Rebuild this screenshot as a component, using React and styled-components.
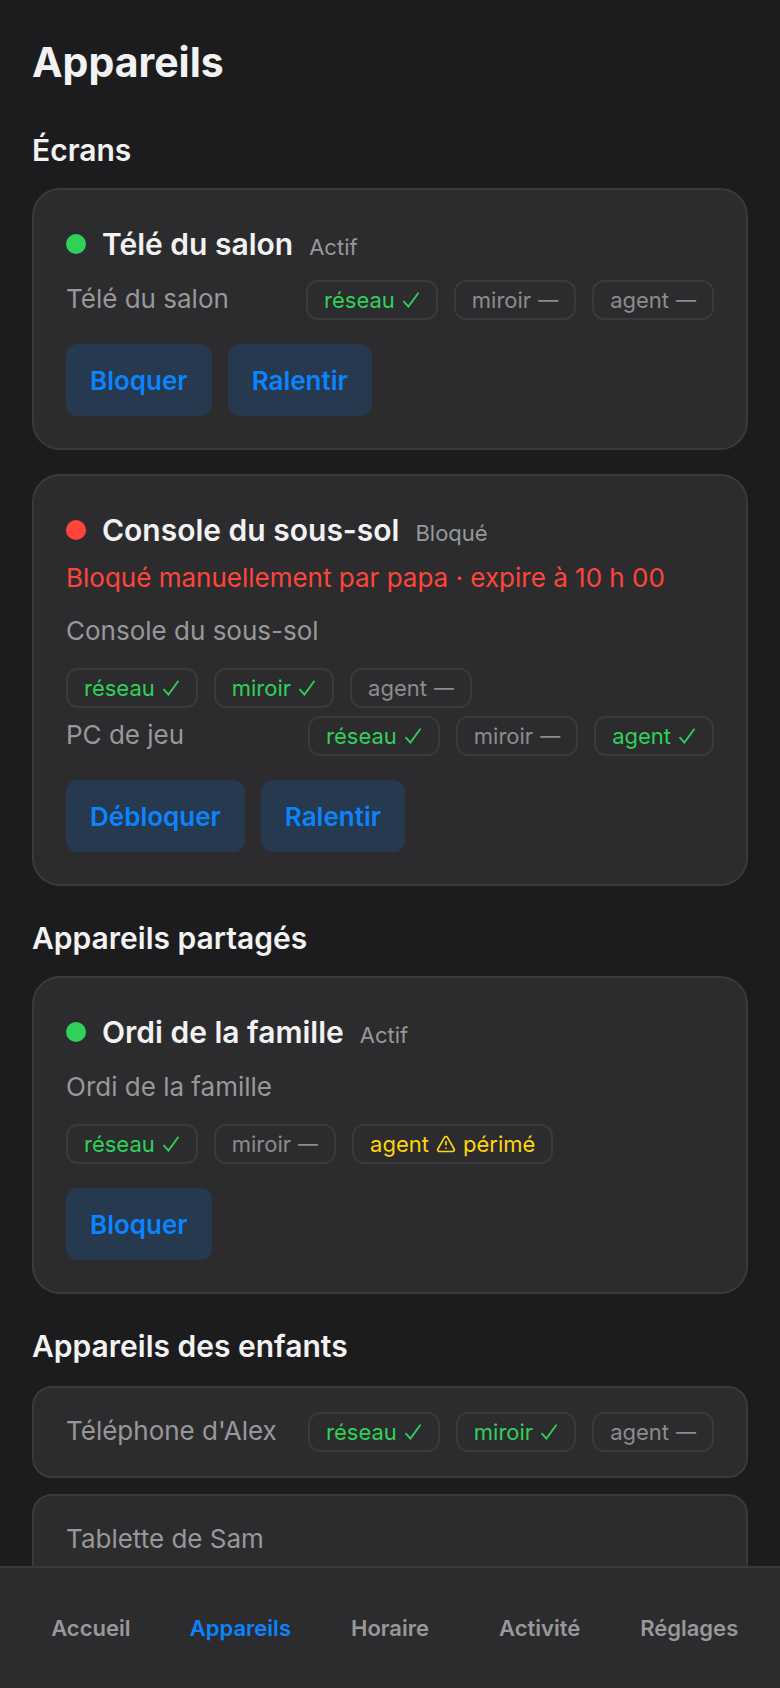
import React, { useState } from "react";
import styled, { createGlobalStyle } from "styled-components";
import { TriangleAlert } from "lucide-react";

const screens = [
  {
    name: "Télé du salon",
    blocked: false,
    devices: [
      { name: "Télé du salon", chips: { réseau: "ok", miroir: "none", agent: "none" } },
    ],
    actions: ["Bloquer", "Ralentir"],
  },
  {
    name: "Console du sous-sol",
    blocked: true,
    reason: "Bloqué manuellement par papa · expire à 10 h 00",
    devices: [
      { name: "Console du sous-sol", chips: { réseau: "ok", miroir: "ok", agent: "none" } },
      { name: "PC de jeu", chips: { réseau: "ok", miroir: "none", agent: "ok" } },
    ],
    actions: ["Débloquer", "Ralentir"],
  },
];

const shared = [
  {
    name: "Ordi de la famille",
    blocked: false,
    devices: [
      { name: "Ordi de la famille", chips: { réseau: "ok", miroir: "none", agent: "stale" } },
    ],
    actions: ["Bloquer"],
  },
];

const kids = [
  { name: "Téléphone d'Alex", chips: { réseau: "ok", miroir: "ok", agent: "none" } },
  { name: "Tablette de Sam", chips: {} },
];

const tabs = ["Accueil", "Appareils", "Horaire", "Activité", "Réglages"];

function StatusChip({ label, status }) {
  return (
    <Chip $status={status}>
      {label}
      {status === "ok" && (
        <CheckMark viewBox="0 0 18 16" role="img" aria-label="ok">
          <path d="M1.5 9.2 L6.4 14.6 L16.5 0.8" />
        </CheckMark>
      )}
      {status === "none" && <Dash>—</Dash>}
      {status === "stale" && (
        <>
          <TriangleAlert size={20} strokeWidth={2} aria-hidden="true" />
          périmé
        </>
      )}
    </Chip>
  );
}

function Device({ device }) {
  return (
    <>
      <DeviceName>{device.name}</DeviceName>
      <Chips>
        {Object.entries(device.chips).map(([label, status]) => (
          <StatusChip key={label} label={label} status={status} />
        ))}
      </Chips>
    </>
  );
}

function GroupCard({ group }) {
  return (
    <Card>
      <CardHeader>
        <Dot $blocked={group.blocked} />
        <CardTitle>{group.name}</CardTitle>
        <State>{group.blocked ? "Bloqué" : "Actif"}</State>
      </CardHeader>
      {group.reason && <Reason>{group.reason}</Reason>}
      <DeviceList>
        {group.devices.map((device) => (
          <DeviceRow key={device.name}>
            <Device device={device} />
          </DeviceRow>
        ))}
      </DeviceList>
      <Actions>
        {group.actions.map((action) => (
          <ActionButton key={action} type="button">{action}</ActionButton>
        ))}
      </Actions>
    </Card>
  );
}

export default function App() {
  const [active, setActive] = useState("Appareils");

  return (
    <>
      <GlobalStyle />
      <Page>
        <PageTitle>Appareils</PageTitle>
        <section>
          <SectionTitle>Écrans</SectionTitle>
          <CardStack>
            {screens.map((group) => <GroupCard key={group.name} group={group} />)}
          </CardStack>
        </section>
        <section>
          <SectionTitle>Appareils partagés</SectionTitle>
          <CardStack>
            {shared.map((group) => <GroupCard key={group.name} group={group} />)}
          </CardStack>
        </section>
        <section>
          <SectionTitle>Appareils des enfants</SectionTitle>
          <KidList>
            {kids.map((device) => (
              <KidRow key={device.name}>
                <Device device={device} />
              </KidRow>
            ))}
          </KidList>
        </section>
      </Page>
      <TabBar>
        {tabs.map((tab) => (
          <TabLink
            key={tab}
            href={`#${tab.toLowerCase()}`}
            $active={tab === active}
            onClick={() => setActive(tab)}
          >
            {tab}
          </TabLink>
        ))}
      </TabBar>
    </>
  );
}

const GlobalStyle = createGlobalStyle`
  * {
    box-sizing: border-box;
  }
  body {
    margin: 0;
    background: #1c1c1e;
    color: #f2f2f2;
    font-family: Inter, "Liberation Sans", sans-serif;
    font-size: 26px;
    -webkit-font-smoothing: antialiased;
  }
  h1, h2, h3, p, ul {
    margin: 0;
    padding: 0;
  }
  ul {
    list-style: none;
  }
`;

const Page = styled.main`
  padding: 36px 32px 154px;
`;

const PageTitle = styled.h1`
  margin-bottom: 41px;
  font-size: 41px;
  font-weight: 700;
  line-height: 52px;
`;

const SectionTitle = styled.h2`
  margin-bottom: 17px;
  font-size: 30px;
  font-weight: 600;
  line-height: 42px;
  section + section & {
    margin-top: 31px;
  }
`;

const CardStack = styled.div`
  display: flex;
  flex-direction: column;
  gap: 24px;
`;

const Card = styled.article`
  padding: 32px;
  border: 2px solid #3a3a3c;
  border-radius: 28px;
  background: #2c2c2e;
`;

const CardHeader = styled.header`
  display: flex;
  align-items: baseline;
  gap: 16px;
`;

const Dot = styled.span`
  align-self: center;
  width: 20px;
  height: 20px;
  border-radius: 50%;
  background: ${({ $blocked }) => ($blocked ? "#ff453a" : "#30d158")};
`;

const CardTitle = styled.h3`
  font-size: 30px;
  font-weight: 600;
  line-height: 44px;
`;

const State = styled.span`
  color: #98989a;
  font-size: 22px;
  line-height: 28px;
`;

const Reason = styled.p`
  margin-top: 6px;
  color: #ff453a;
  line-height: 40px;
`;

const DeviceList = styled.ul`
  display: flex;
  flex-direction: column;
  gap: 8px;
  margin-top: 14px;
`;

const DeviceRow = styled.li`
  display: flex;
  flex-wrap: wrap;
  align-items: baseline;
  justify-content: space-between;
  gap: 18px 16px;
`;

const DeviceName = styled.span`
  color: #98989a;
  line-height: 38px;
`;

const Chips = styled.div`
  display: flex;
  gap: 16px;
`;

const chipColors = { ok: "#30d158", none: "#8c8c8e", stale: "#ffd60a" };

const Chip = styled.span`
  display: flex;
  align-items: center;
  gap: 7px;
  padding: 4px 16px;
  border: 2px solid #3a3a3c;
  border-radius: 12px;
  color: ${({ $status }) => chipColors[$status]};
  font-size: 22px;
  line-height: 28px;
`;

const CheckMark = styled.svg`
  width: 18px;
  height: 16px;
  fill: none;
  stroke: currentColor;
  stroke-width: 1.8;
`;

const Dash = styled.span`
  font-size: 20px;
`;

const Actions = styled.div`
  display: flex;
  gap: 16px;
  margin-top: 24px;
`;

const ActionButton = styled.button`
  min-height: 72px;
  padding: 0 24px;
  border: none;
  border-radius: 12px;
  background: rgba(10, 132, 255, 0.16);
  color: #0a84ff;
  font: inherit;
  font-weight: 600;
  cursor: pointer;
`;

const KidList = styled.ul`
  display: flex;
  flex-direction: column;
  gap: 16px;
  padding-top: 2px;
`;

const KidRow = styled(DeviceRow)`
  padding: 24px 32px;
  border: 2px solid #3a3a3c;
  border-radius: 20px;
  background: #2c2c2e;
`;

const TabBar = styled.nav`
  position: fixed;
  right: 0;
  bottom: 0;
  left: 0;
  display: flex;
  padding: 16px;
  border-top: 2px solid #3a3a3c;
  background: #2c2c2e;
`;

const TabLink = styled.a`
  display: flex;
  flex: 1;
  align-items: center;
  justify-content: center;
  min-height: 88px;
  color: ${({ $active }) => ($active ? "#0a84ff" : "#98989a")};
  font-size: 22px;
  font-weight: 600;
  text-decoration: none;
`;
